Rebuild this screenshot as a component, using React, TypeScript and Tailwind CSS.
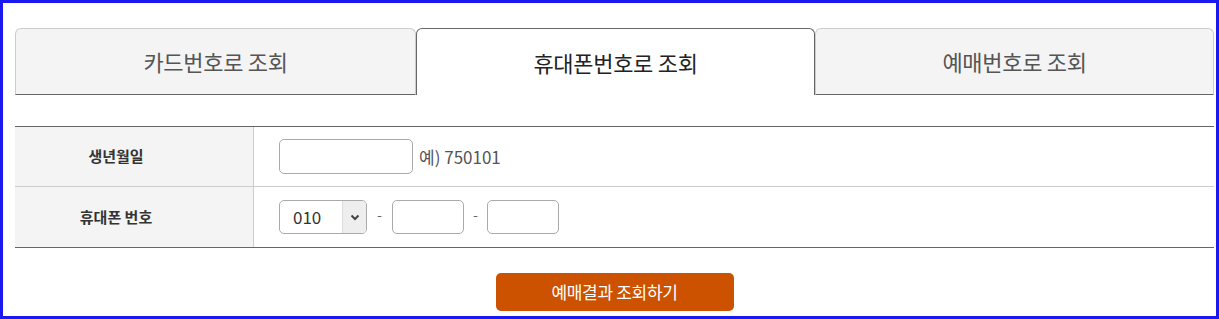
import React from "react";

const font = { fontFamily: '"Noto Sans CJK KR", "Noto Sans", sans-serif' };

export default function App() {
  return (
    <div className="w-[1219px] h-[319px] bg-white border-[3px] border-[#1a1af0] box-border overflow-hidden" style={font}>
      <div className="pt-[25px] px-[12px] pr-[2px]">
        {/* Tabs */}
        <div className="flex w-[1199px] h-[67px]">
          <div className="w-[401px] h-[67px] box-border bg-[#f4f4f4] border border-[#cccccc] border-b-[#666666] rounded-t-[6px] flex items-center justify-center text-[22px] text-[#555555] tracking-[-0.3px]">
            카드번호로 조회
          </div>
          <div className="w-[399px] h-[67px] box-border bg-white border border-[#666666] border-b-0 rounded-t-[6px] flex items-center justify-center text-[22px] text-[#222222] tracking-[-0.3px]">
            휴대폰번호로 조회
          </div>
          <div className="w-[399px] h-[67px] box-border bg-[#f4f4f4] border border-[#cccccc] border-b-[#666666] rounded-t-[6px] flex items-center justify-center text-[22px] text-[#555555] tracking-[-0.3px]">
            예매번호로 조회
          </div>
        </div>

        {/* Table */}
        <div className="mt-[31px] w-[1199px] border-t border-b border-[#666666]">
          <div className="flex h-[60px] border-b border-[#cccccc]">
            <div className="w-[239px] bg-[#f4f4f4] border-r border-[#cccccc] flex items-center justify-center pr-[36px] text-[15px] font-bold text-[#333333]">
              생년월일
            </div>
            <div className="flex items-center pl-[25px]">
              <div className="w-[134px] h-[35px] border border-[#aaaaaa] rounded-[5px] box-border" />
              <span className="ml-[6px] text-[17px] text-[#555555]">예) 750101</span>
            </div>
          </div>
          <div className="flex h-[60px]">
            <div className="w-[239px] bg-[#f4f4f4] border-r border-[#cccccc] flex items-center justify-center pr-[36px] text-[15px] font-bold text-[#333333]">
              휴대폰 번호
            </div>
            <div className="flex items-center pl-[25px]">
              <div className="w-[88px] h-[34px] border border-[#aaaaaa] rounded-[5px] box-border flex overflow-hidden">
                <div className="flex-1 flex items-center pl-[13px] text-[17px] text-[#333333]">010</div>
                <div className="w-[24px] bg-[#eeeeee] border-l border-[#dddddd] flex items-center justify-center">
                  <svg width="10" height="7" viewBox="0 0 10 7">
                    <path d="M1.5 1.5 L5 5 L8.5 1.5" stroke="#444" strokeWidth="2" fill="none" />
                  </svg>
                </div>
              </div>
              <span className="w-[25px] text-center text-[14px] text-[#666666] -mt-[6px]">-</span>
              <div className="w-[72px] h-[34px] border border-[#aaaaaa] rounded-[5px] box-border" />
              <span className="w-[23px] text-center text-[14px] text-[#666666] -mt-[6px]">-</span>
              <div className="w-[72px] h-[34px] border border-[#aaaaaa] rounded-[5px] box-border" />
            </div>
          </div>
        </div>

        {/* Button */}
        <div className="w-[1199px] flex justify-center mt-[25px]">
          <div className="w-[238px] h-[38px] bg-[#cc5200] rounded-[5px] flex items-center justify-center text-white text-[17px] tracking-[-0.3px]">
            예매결과 조회하기
          </div>
        </div>
      </div>
    </div>
  );
}
